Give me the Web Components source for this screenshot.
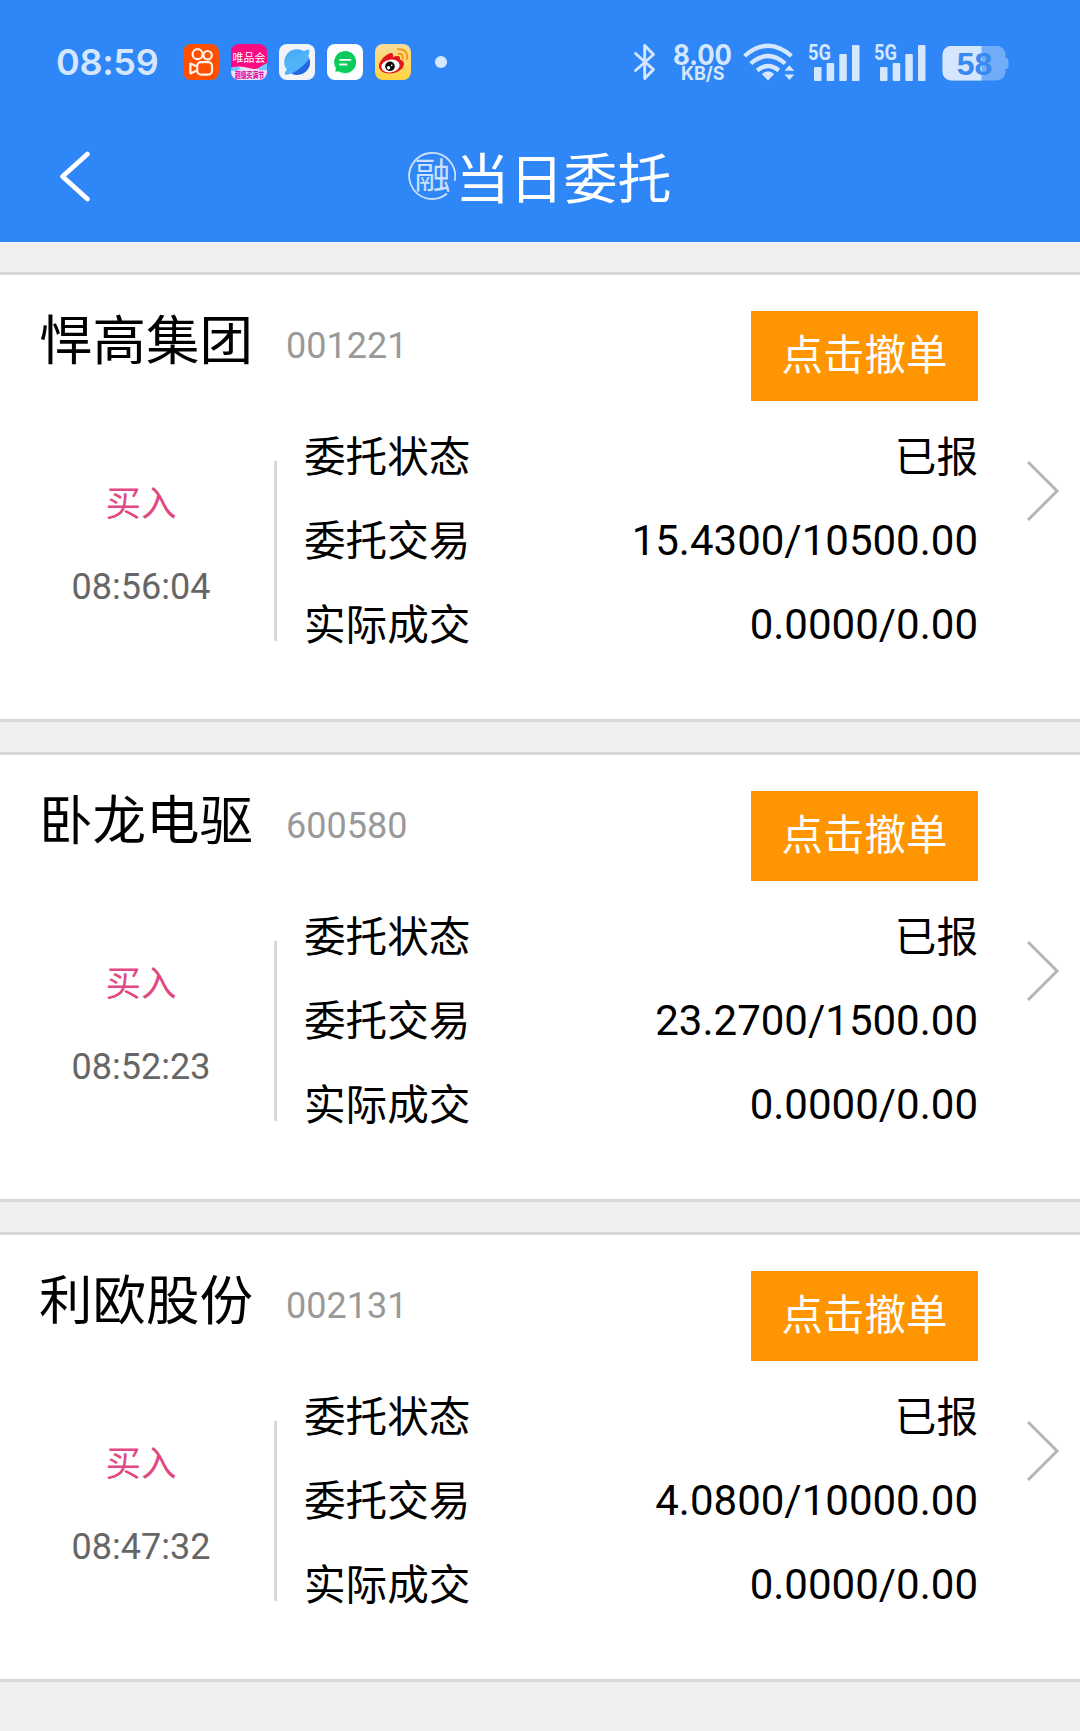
<!DOCTYPE html>
<html lang="zh-CN">
<head>
<meta charset="utf-8">
<title>当日委托</title>
<style>
  body {
    margin: 0;
    background: #efefef;
    color: #000;
    font-family: Roboto, "Noto Sans CJK SC", sans-serif;
  }

  main {
    display: flex;
    flex-direction: column;
    gap: 30px;
    padding: 30px 0 49px;
  }
</style>
</head>
<body>
  <status-bar time="08:59" speed="8.00" battery="58"></status-bar>
  <title-bar badge="融">当日委托</title-bar>
  <main>
    <order-card code="001221" side="买入" time="08:56:04">
      悍高集团
      <order-row slot="rows" label="委托状态" words>已报</order-row>
      <order-row slot="rows" label="委托交易">15.4300/10500.00</order-row>
      <order-row slot="rows" label="实际成交">0.0000/0.00</order-row>
    </order-card>
    <order-card code="600580" side="买入" time="08:52:23">
      卧龙电驱
      <order-row slot="rows" label="委托状态" words>已报</order-row>
      <order-row slot="rows" label="委托交易">23.2700/1500.00</order-row>
      <order-row slot="rows" label="实际成交">0.0000/0.00</order-row>
    </order-card>
    <order-card code="002131" side="买入" time="08:47:32">
      利欧股份
      <order-row slot="rows" label="委托状态" words>已报</order-row>
      <order-row slot="rows" label="委托交易">4.0800/10000.00</order-row>
      <order-row slot="rows" label="实际成交">0.0000/0.00</order-row>
    </order-card>
  </main>

<script>
class SignalBars extends HTMLElement {
  constructor() {
    super();
    this.attachShadow({ mode: "open" });
    this.shadowRoot.innerHTML = `
      <style>
        :host {
          display: block;
          width: 52px;
          height: 38px;
        }
        svg {
          display: block;
          overflow: visible;
        }
        text {
          font: 700 21.5px Roboto, sans-serif;
        }
      </style>
      <svg width="52" height="38" fill="currentColor">
        <text x="0" y="16.5" textLength="23" lengthAdjust="spacingAndGlyphs">5G</text>
        <rect x="6" y="24" width="7.5" height="14" rx="1"/>
        <rect x="18.7" y="20" width="7.5" height="18" rx="1"/>
        <rect x="31.3" y="11" width="7.5" height="27" rx="1"/>
        <rect x="44" y="2" width="7.5" height="36" rx="1"/>
      </svg>
    `;
  }
}

class StatusBar extends HTMLElement {
  constructor() {
    super();
    this.attachShadow({ mode: "open" });
    this.shadowRoot.innerHTML = `
      <style>
        :host {
          display: flex;
          align-items: center;
          box-sizing: border-box;
          height: 124px;
          padding: 0 71px 0 56px;
          background: #2f86f6;
          color: #d5e7fe;
          font-family: Inter, sans-serif;
        }
        svg {
          display: block;
          flex: none;
          overflow: visible;
        }
        #time {
          width: 127px;
          font-size: 36px;
          font-weight: 600;
          line-height: 40px;
          letter-spacing: -0.3px;
        }
        #apps {
          display: flex;
          gap: 12px;
        }
        #dot {
          width: 12px;
          height: 12px;
          margin-left: 24px;
          border-radius: 50%;
          background: currentColor;
        }
        #right {
          display: flex;
          align-items: center;
          margin-left: auto;
        }
        #speed {
          margin: 0 10px 0 15px;
        }
        #rate {
          font-size: 28px;
          font-weight: 700;
        }
        #unit {
          font-size: 18.5px;
          font-weight: 700;
        }
        signal-bars {
          margin-left: 14px;
        }
        #wifi + signal-bars {
          margin-left: 13px;
        }
        #battery {
          margin-left: 16px;
        }
        #percent {
          font: 700 32px "Liberation Sans", sans-serif;
        }
      </style>
      <div id="time"></div>
      <div id="apps">
        <!-- kuaishou -->
        <svg width="36" height="36" viewBox="0 0 36 36">
          <rect width="36" height="36" rx="8" fill="#fe5000"/>
          <g fill="none" stroke="#fff3ea" stroke-width="2.2" stroke-linejoin="round">
            <circle cx="14.6" cy="10.2" r="5"/>
            <circle cx="24.6" cy="11.2" r="4.2"/>
            <rect x="14.2" y="18.2" width="14.8" height="12.4" rx="3.8"/>
            <path d="M14 22.6 7.4 19.6V29.4L14 26.4"/>
          </g>
        </svg>
        <!-- vipshop -->
        <svg width="36" height="36" viewBox="0 0 36 36">
          <defs><clipPath id="vip"><rect width="36" height="36" rx="8"/></clipPath></defs>
          <g clip-path="url(#vip)">
            <rect width="36" height="36" fill="#fb0a80"/>
            <path d="M0 24Q8 21 18 24T36 20V36H0Z" fill="#e9e3ff"/>
            <path d="M0 24Q5 22 10 24L6 27H0ZM27 24 36 19V26H28Z" fill="#6cc8ff"/>
          </g>
          <text x="1.5" y="18" font-family="Noto Sans CJK SC" font-size="11" textLength="33" lengthAdjust="spacingAndGlyphs" fill="#fff">唯品会</text>
          <text x="4" y="33.5" font-family="Noto Sans CJK SC" font-size="7.5" font-weight="900" textLength="29" lengthAdjust="spacingAndGlyphs" fill="#e5149c">超级买满节</text>
        </svg>
        <!-- browser planet -->
        <svg width="36" height="36" viewBox="0 0 36 36">
          <defs>
            <linearGradient id="sky" x1="0" y1="0" x2="0" y2="1">
              <stop offset="0" stop-color="#45aaf8"/><stop offset="1" stop-color="#57bdf6"/>
            </linearGradient>
          </defs>
          <rect width="36" height="36" rx="8" fill="#f3f4f7"/>
          <circle cx="18" cy="18" r="12.8" fill="url(#sky)"/>
          <path d="M30.5 14.5A12.8 12.8 0 0 1 12.4 29.5Q23 24.5 30.5 14.5Z" fill="#2466e4"/>
          <path d="M24.8 7.2Q29.5 4.5 30.3 6.3Q31.5 10 25 18.5Q17 28 9.5 30.5Q5.3 31.7 5.7 29Q6.2 27 8 25.5Z" fill="#50b2f8"/>
        </svg>
        <!-- messages -->
        <svg width="36" height="36" viewBox="0 0 36 36">
          <rect width="36" height="36" rx="8" fill="#fff"/>
          <circle cx="18" cy="19.5" r="11" fill="#d8f7e2"/>
          <path d="M18 7a11 11 0 1 1-5.5 20.4L8.2 27.5 9 24A11 11 0 0 1 18 7Z" fill="#09cc5d"/>
          <path d="M13 15.800H23.5M13 20.500H19.5" stroke="#fff" stroke-width="1.8" stroke-linecap="round"/>
        </svg>
        <!-- weibo -->
        <svg width="36" height="36" viewBox="0 0 36 36">
          <defs>
            <linearGradient id="gold" x1="0" y1="0" x2="0" y2="1">
              <stop offset="0" stop-color="#f8dc9b"/><stop offset="1" stop-color="#ffd43c"/>
            </linearGradient>
          </defs>
          <rect width="36" height="36" rx="8" fill="url(#gold)"/>
          <path d="M14.5 9.5C17.5 8 18.700 10 17.8 13C22 11.3 26 11.3 25 15.500C30 17 30 21.5 26.5 25C20.5 31 8.5 31 5 25.5C1.500 19.5 9 11.5 14.5 9.5Z" fill="#e3161b"/>
          <ellipse cx="15.5" cy="22" rx="9.2" ry="6.4" fill="#fff" transform="rotate(-8 15.5 22)"/>
          <circle cx="15" cy="22.3" r="4.8" fill="#0b0505"/>
          <circle cx="13.6" cy="23.8" r="1.7" fill="#fff"/>
          <circle cx="16.7" cy="21.4" r=".8" fill="#fff"/>
          <path d="M23.5 9.8Q28.2 9.2 27.7 14.500M22.8 5.2Q33 4.5 32 15" fill="none" stroke="#f59a12" stroke-width="2" stroke-linecap="round"/>
        </svg>
      </div>
      <div id="dot"></div>
      <div id="right">
        <svg width="22" height="38" fill="none" stroke="currentColor" stroke-width="2.9" stroke-linejoin="round" stroke-linecap="round">
          <path d="M1.5 10.500 19.5 26.5 10.7 35.500V2.500L19.5 11.5 1.5 27.5"/>
        </svg>
        <svg id="speed" width="62" height="38" fill="currentColor">
          <text id="rate" x="2" y="21.5" textLength="59" lengthAdjust="spacingAndGlyphs"></text>
          <text id="unit" x="10" y="36.5" textLength="43.5" lengthAdjust="spacingAndGlyphs">KB/S</text>
        </svg>
        <svg id="wifi" width="52" height="38" fill="none" stroke="currentColor" stroke-width="4.3">
          <path d="M1.5 13Q25 -7.5 48.5 13M7.8 20.5Q25 5.5 42.2 20.500M14.2 27.5Q25 18.5 35.8 27.5"/>
          <path d="M25 37.5 18.8 31Q25 25.5 31.2 31ZM41.5 27.800H51.3L46.4 22.200ZM41.5 31.500H51.3L46.4 37Z" fill="currentColor" stroke="none"/>
        </svg>
        <signal-bars></signal-bars>
        <signal-bars></signal-bars>
        <svg id="battery" width="67" height="38">
          <defs><clipPath id="level"><rect width="39.5" height="38"/></clipPath></defs>
          <path d="M62.5 15H64Q66.5 15 66.5 18V23Q66.5 26 64 26H62.500Z" fill="#71acf9"/>
          <rect x=".5" y="3" width="63" height="34.5" rx="8.5" fill="#71acf9"/>
          <rect x=".5" y="3" width="63" height="34.5" rx="8.5" fill="currentColor" clip-path="url(#level)"/>
          <text id="percent" x="32.5" y="31.5" text-anchor="middle" fill="#3889f0"></text>
        </svg>
      </div>
    `;
  }

  connectedCallback() {
    this.shadowRoot.getElementById("time").textContent = this.getAttribute("time");
    this.shadowRoot.getElementById("rate").textContent = this.getAttribute("speed");
    this.shadowRoot.getElementById("percent").textContent = this.getAttribute("battery");
  }
}

class TitleBar extends HTMLElement {
  constructor() {
    super();
    this.attachShadow({ mode: "open" });
    this.shadowRoot.innerHTML = `
      <style>
        :host {
          display: grid;
          grid-template-columns: 200px 1fr 200px;
          align-items: center;
          box-sizing: border-box;
          height: 118px;
          padding-bottom: 14px;
          background: #2f86f6;
          color: #fff;
        }
        #back {
          display: block;
          margin-left: 58px;
        }
        #title {
          display: flex;
          align-items: center;
          justify-content: center;
          font-size: 54px;
          line-height: 80px;
        }
        #title svg {
          margin-left: -1px;
        }
        #text {
          padding-top: 9px;
        }
        #badge {
          font-size: 36px;
        }
      </style>
      <svg id="back" width="34" height="54" fill="none" stroke="currentColor" stroke-width="4.8" stroke-linecap="round" stroke-linejoin="round">
        <path d="M29.5 5 4.5 27.5 29.5 50"/>
      </svg>
      <div id="title">
        <svg width="48" height="48" opacity=".75">
          <path d="M46.6 29A23 23 0 1 0 39 41.5" fill="none" stroke="currentColor" stroke-width="1.8"/>
          <text id="badge" x="24.5" y="36.5" text-anchor="middle" fill="currentColor"></text>
        </svg>
        <div id="text"><slot></slot></div>
      </div>
    `;
  }

  connectedCallback() {
    this.shadowRoot.getElementById("badge").textContent = this.getAttribute("badge");
  }
}

class OrderRow extends HTMLElement {
  constructor() {
    super();
    this.attachShadow({ mode: "open" });
    this.shadowRoot.innerHTML = `
      <style>
        :host {
          display: flex;
          justify-content: space-between;
          height: 84px;
          font-size: 42px;
          line-height: 84px;
          white-space: nowrap;
        }
        #label,
        :host([words]) #value {
          padding-top: 1px;
          font-size: 41.6px;
        }
      </style>
      <span id="label"></span>
      <span id="value"><slot></slot></span>
    `;
  }

  connectedCallback() {
    this.shadowRoot.getElementById("label").textContent = this.getAttribute("label");
  }
}

class OrderCard extends HTMLElement {
  constructor() {
    super();
    this.attachShadow({ mode: "open" });
    this.shadowRoot.innerHTML = `
      <style>
        :host {
          display: flex;
          box-sizing: border-box;
          height: 450px;
          border-top: 3px solid #d8d8d8;
          border-bottom: 3px solid #d8d8d8;
          background: #fff;
        }
        #content {
          width: 978px;
        }
        #head {
          display: flex;
          align-items: flex-start;
          height: 140px;
          padding-left: 39px;
        }
        #name {
          width: 247px;
          font-size: 53.5px;
          line-height: 80px;
          padding-top: 27px;
        }
        #code {
          color: #999;
          font-size: 36px;
          line-height: 60px;
          padding-top: 41px;
        }
        button {
          width: 227px;
          height: 90px;
          margin: 36px 0 0 auto;
          padding: 0;
          border: none;
          background: #ff9500;
          color: #fff;
          font: inherit;
          font-size: 41.5px;
          line-height: 90px;
        }
        #body {
          display: flex;
          height: 252px;
        }
        #side {
          width: 266px;
          padding: 46px 0 0 8px;
          font-size: 36px;
          line-height: 84px;
          text-align: center;
        }
        #action {
          height: 83px;
          padding-top: 1px;
          color: #e04a83;
          font-size: 35.5px;
        }
        #time {
          color: #666;
        }
        #divider {
          width: 3px;
          height: 180px;
          margin-top: 46px;
          background: #d8d8d8;
        }
        #rows {
          flex: 1;
          padding-left: 27px;
        }
        #more {
          display: block;
          margin: 184px 0 0 48px;
        }
      </style>
      <div id="content">
        <div id="head">
          <div id="name"><slot></slot></div>
          <div id="code"></div>
          <button>点击撤单</button>
        </div>
        <div id="body">
          <div id="side">
            <div id="action"></div>
            <div id="time"></div>
          </div>
          <div id="divider"></div>
          <div id="rows"><slot name="rows"></slot></div>
        </div>
      </div>
      <svg id="more" width="36" height="64" fill="none" stroke="#b5b5b5" stroke-width="3">
        <path d="M2 3 31 32 2 61"/>
      </svg>
    `;
  }

  connectedCallback() {
    this.shadowRoot.getElementById("code").textContent = this.getAttribute("code");
    this.shadowRoot.getElementById("action").textContent = this.getAttribute("side");
    this.shadowRoot.getElementById("time").textContent = this.getAttribute("time");
  }
}

customElements.define("signal-bars", SignalBars);
customElements.define("status-bar", StatusBar);
customElements.define("title-bar", TitleBar);
customElements.define("order-row", OrderRow);
customElements.define("order-card", OrderCard);
</script>
</body>
</html>
